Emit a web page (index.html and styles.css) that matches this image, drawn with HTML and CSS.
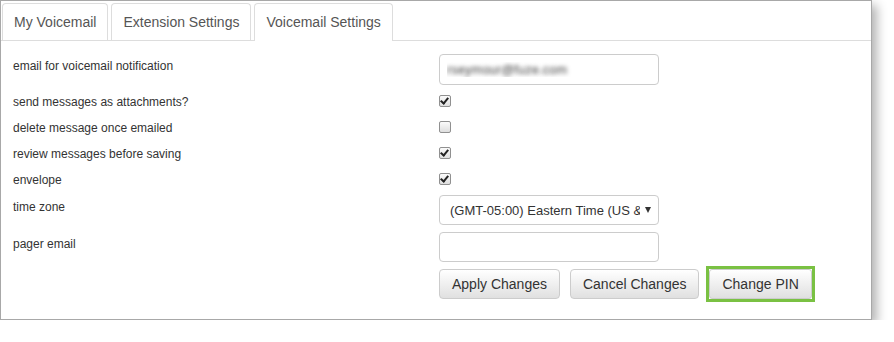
FILE: index.html
```html
<!DOCTYPE html>
<html lang="en">
<head>
  <meta charset="UTF-8">
  <meta name="viewport" content="width=device-width, initial-scale=1.0">
  <title>Voicemail Settings</title>
  <link rel="stylesheet" href="styles.css">
</head>
<body>
  <div class="frame">
    <ul class="tabs">
      <li class="tab">My Voicemail</li>
      <li class="tab">Extension Settings</li>
      <li class="tab active">Voicemail Settings</li>
    </ul>

    <div class="form">
      <div class="row row-text">
        <label for="vmEmail">email for voicemail notification</label>
        <input type="text" id="vmEmail" class="field blurred" value="rseymour@fuze.com">
      </div>

      <div class="row row-check first">
        <label>send messages as attachments?</label>
        <span class="check on"></span>
      </div>
      <div class="row row-check">
        <label>delete message once emailed</label>
        <span class="check"></span>
      </div>
      <div class="row row-check">
        <label>review messages before saving</label>
        <span class="check on"></span>
      </div>
      <div class="row row-check">
        <label>envelope</label>
        <span class="check on"></span>
      </div>

      <div class="row row-text row-select">
        <label>time zone</label>
        <div class="field select">
          <span class="select-value">(GMT-05:00) Eastern Time (US &amp; Canada)</span>
          <span class="select-arrow"></span>
        </div>
      </div>

      <div class="row row-text row-pager">
        <label for="pager">pager email</label>
        <input type="text" id="pager" class="field">
      </div>

      <div class="row buttons">
        <span class="spacer"></span>
        <button>Apply Changes</button>
        <button>Cancel Changes</button>
        <span class="highlight"><button>Change PIN</button></span>
      </div>
    </div>
  </div>
</body>
</html>
```

FILE: styles.css
```css
:root {
  --text: #333;
  --tab-text: #555;
  --line: #ddd;
  --field-border: #ccc;
  --frame-border: #a8a8a8;
  --green: #7ac143;
}

html, body {
  margin: 0;
  background: #fff;
  overflow: hidden;
}

body {
  font-family: "Liberation Sans", Arial, sans-serif;
  color: var(--text);
}

.frame {
  width: 870px;
  height: 318px;
  border: 1px solid var(--frame-border);
  background: #fff;
  box-shadow: 5px 5px 10px rgba(0, 0, 0, 0.3);
}

/* tabs */
.tabs {
  display: flex;
  list-style: none;
  margin: 2px 0 0;
  padding: 0 0 0 1px;
  border-bottom: 1px solid var(--line);
}

.tab {
  padding: 0 11px;
  height: 36px;
  line-height: 37px;
  margin-right: 3px;
  margin-bottom: -1px;
  border: 1px solid var(--line);
  border-bottom: none;
  border-radius: 4px 4px 0 0;
  font-size: 14px;
  color: var(--tab-text);
  background: #fff;
}

.tab.active {
  height: 37px;
  color: #555;
}

/* form */
.form {
  padding: 13px 0 0 12px;
}

.row {
  display: flex;
}

.row label {
  width: 426px;
  flex: none;
  font-size: 12px;
  line-height: 14px;
}

.row-text label {
  padding-top: 5px;
}

.field {
  box-sizing: border-box;
  width: 220px;
  height: 30px;
  border: 1px solid var(--field-border);
  border-radius: 4px;
  background: #fff;
  font-family: inherit;
  margin: 0;
}

input.field {
  padding: 0 7px;
  font-size: 12px;
}

.blurred {
  height: 31px;
  font-size: 13px !important;
  color: transparent;
  text-shadow: 0 0 4px rgba(0, 0, 0, 0.75);
}

.row-check {
  height: 26px;
  align-items: center;
}

.row-check.first {
  margin-top: 3px;
}

.row-check label {
  padding-top: 2px;
}

.check {
  box-sizing: border-box;
  width: 12px;
  height: 12px;
  border: 1px solid #909090;
  border-radius: 2px;
  background: linear-gradient(#fbfbfb, #dedede);
  position: relative;
}

.check.on::after {
  content: "";
  position: absolute;
  left: 2px;
  top: 0;
  width: 3px;
  height: 6px;
  border: solid #222;
  border-width: 0 2px 2px 0;
  transform: rotate(40deg);
}

.row-select {
  margin-top: 3px;
}

.select {
  display: flex;
  align-items: center;
  padding: 0 7px 0 10px;
  font-size: 13px;
}

.select-value {
  flex: none;
  width: 190px;
  overflow: hidden;
  white-space: nowrap;
}

.select-arrow {
  margin-left: auto;
  width: 0;
  height: 0;
  border-left: 3.5px solid transparent;
  border-right: 3.5px solid transparent;
  border-top: 6px solid #333;
}

.row-pager {
  margin-top: 7px;
}

.buttons {
  margin-top: 7px;
  gap: 10px;
}

.buttons .spacer {
  width: 416px;
}

button {
  height: 30px;
  padding: 0 12px;
  font-family: inherit;
  font-size: 14px;
  color: var(--text);
  background: linear-gradient(#fff, #e0e0e0);
  border: 1px solid var(--field-border);
  border-radius: 4px;
}

.highlight {
  display: block;
  margin: -3px 0 0 -3px;
  border: 3px solid var(--green);
}

.highlight button {
  display: block;
  border-radius: 3px;
}
```
